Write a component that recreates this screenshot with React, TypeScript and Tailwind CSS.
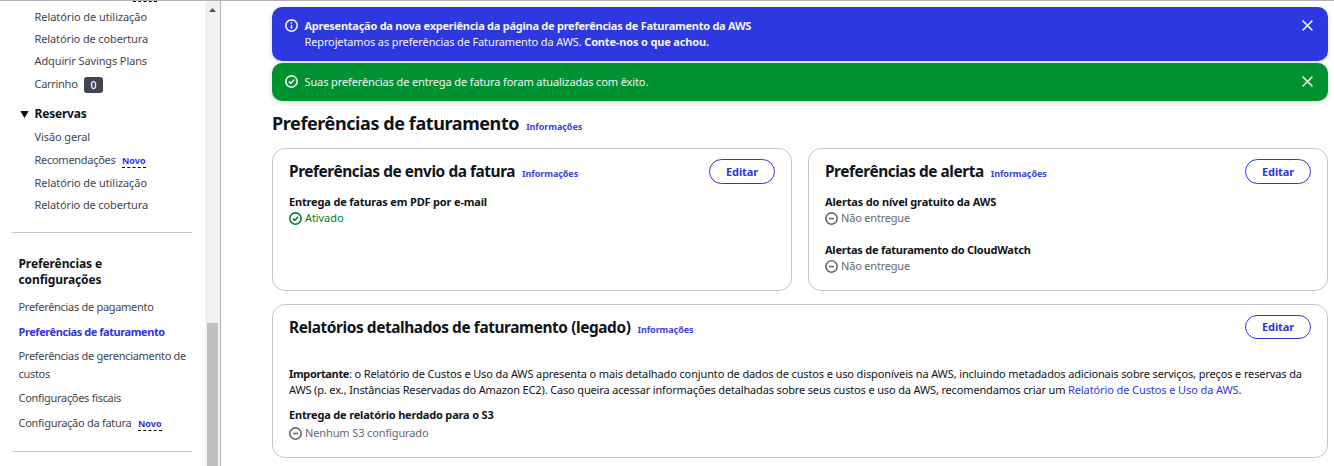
import type { ReactNode } from "react";

const stroke = { fill: "none", stroke: "currentColor", strokeWidth: 2 } as const;

function CheckIcon({ className = "" }: { className?: string }) {
  return (
    <svg viewBox="0 0 16 16" className={`size-[13px] shrink-0 ${className}`} {...stroke}>
      <circle cx="8" cy="8" r="7" />
      <path d="M4.8 8.2 7.1 10.4 11.2 5.8" />
    </svg>
  );
}

function InfoIcon({ className = "" }: { className?: string }) {
  return (
    <svg viewBox="0 0 16 16" className={`size-[13px] shrink-0 ${className}`} {...stroke}>
      <circle cx="8" cy="8" r="7" />
      <path d="M8 12V7M8 5.7V3.9" strokeWidth="1.9" />
    </svg>
  );
}

function StoppedIcon({ className = "" }: { className?: string }) {
  return (
    <svg viewBox="0 0 16 16" className={`size-[13px] shrink-0 ${className}`} {...stroke}>
      <circle cx="8" cy="8" r="7" />
      <path d="M5 8h6" />
    </svg>
  );
}

function CloseIcon() {
  return (
    <svg viewBox="0 0 11 11" className="size-[11px] shrink-0 text-[#ebebf0]" {...stroke} strokeWidth={1.5}>
      <path d="M.6.6l9.8 9.8M10.4.6.6 10.4" />
    </svg>
  );
}

function Novo() {
  return (
    <span className="ml-[6.5px] h-4 border-b border-dashed border-black text-[9px] leading-[17px] font-bold text-[#2f36e0]">
      Novo
    </span>
  );
}

function Info() {
  return <a className="ml-[7px] text-[9px] font-bold tracking-[-0.075px] text-[#3b3fe2]">Informações</a>;
}

function Edit({ className = "h-[25px]" }: { className?: string }) {
  return (
    <button
      className={`flex w-[66px] items-center justify-center rounded-full border border-[#2f36e0] text-[11px] leading-4 font-bold tracking-[-0.11px] text-[#2f36e0] ${className}`}
    >
      Editar
    </button>
  );
}

function Card({ title, edit, className, children }: { title: ReactNode; edit?: string; className: string; children: ReactNode }) {
  return (
    <section className={`rounded-[13px] border border-[#c4c4cc] px-4 pt-[10px] ${className}`}>
      <div className="flex h-[25px] items-start justify-between">
        <div className="flex items-baseline leading-[26px]">{title}</div>
        <Edit className={edit} />
      </div>
      {children}
    </section>
  );
}

const h2 = "text-[15.4px] font-bold text-[#0f141a]";
const label = "text-[11px] leading-4 font-bold text-[#0f141a]";
const status = "flex items-center gap-[3px] leading-4 text-[#656871]";

function Sidebar() {
  return (
    <nav className="flex w-[205px] flex-col overflow-hidden text-[#424650]">
      <div className="ml-[133px] h-px w-6 shrink-0 border-t border-dashed border-black" />
      <div className="flex flex-col pl-[34.5px]">
        <a className="mt-[7px] tracking-[-0.072px]">Relatório de utilização</a>
        <a className="mt-[6px] tracking-[-0.12px]">Relatório de cobertura</a>
        <a className="mt-[6px] tracking-[-0.114px]">Adquirir Savings Plans</a>
        <div className="mt-[7px] flex h-[17px]">
          <a className="tracking-[-0.288px]">Carrinho</a>
          <span className="mt-px ml-[6.5px] flex h-4 w-[19px] items-center justify-center rounded-[3px] bg-[#424650] text-[10.5px] font-medium text-white">
            0
          </span>
        </div>
      </div>
      <div className="mt-[13px] flex items-center pl-[20px]">
        <svg viewBox="0 0 9 7" className="mr-[5.5px] h-[7px] w-[9px] fill-[#0f141a]">
          <path d="M.3 0h8.4L4.5 7Z" />
        </svg>
        <h3 className="text-[12px] leading-4 font-bold tracking-[-0.2px] text-[#0f141a]">Reservas</h3>
      </div>
      <div className="flex flex-col pl-[34.5px]">
        <a className="mt-[7px] tracking-[-0.108px]">Visão geral</a>
        <div className="mt-[7px] flex h-4">
          <a className="tracking-[-0.278px]">Recomendações</a>
          <Novo />
        </div>
        <a className="mt-[7px] tracking-[-0.072px]">Relatório de utilização</a>
        <a className="mt-[6px] tracking-[-0.12px]">Relatório de cobertura</a>
      </div>
      <hr className="mt-[19px] ml-3 w-[180px] border-[#c6c6cd]" />
      <div className="flex flex-col pl-[18.5px]">
        <h3 className="mt-[23px] text-[12px] leading-4 font-bold tracking-[-0.1px] text-[#0f141a]">
          Preferências e<br />
          configurações
        </h3>
        <a className="mt-[11px] tracking-[-0.3px]">Preferências de pagamento</a>
        <a className="mt-[9px] font-bold tracking-[-0.43px] text-[#2f36e0]">Preferências de faturamento</a>
        <a className="mt-[7px] leading-[18px] tracking-[-0.3px]">
          Preferências de gerenciamento de
          <br />
          custos
        </a>
        <a className="mt-[7px] tracking-[-0.3px]">Configurações fiscais</a>
        <div className="mt-[9px] flex h-4">
          <a className="tracking-[-0.275px]">Configuração da fatura</a>
          <Novo />
        </div>
      </div>
      <hr className="mt-[20px] ml-3 w-[180px] border-[#c6c6cd]" />
    </nav>
  );
}

export default function App() {
  return (
    <div className="flex h-[466px] w-[1334px] overflow-hidden border-t border-[#b4b1bd] bg-white font-['Noto_Sans',sans-serif] text-[11px] leading-4 whitespace-nowrap text-[#0f141a]">
      <Sidebar />
      <div className="flex w-4 flex-col border-r border-[#b1b1ba] bg-[#f1f1f1]">
        <svg viewBox="0 0 7 4" className="mt-[7px] ml-1 h-1 w-[7px] fill-[#505050]">
          <path d="M3.5 0 7 4H0Z" />
        </svg>
        <div className="mt-[311px] ml-[2px] w-[11px] grow bg-[#c1c1c1]" />
      </div>
      <main className="flex w-[1107px] flex-col pt-[6px] pl-[51px]">
        <div className="flex h-[54px] shrink-0 rounded-[10px] bg-[#2d38e0] pt-[11px] pr-[15px] pl-[13px] text-[#f3f3f7] shadow-[0_2px_5px_rgba(0,7,22,0.14)]">
          <InfoIcon className="mt-px" />
          <div className="ml-[6.5px] grow">
            <p className="font-bold tracking-[-0.253px]">
              Apresentação da nova experiência da página de preferências de Faturamento da AWS
            </p>
            <p className="tracking-[-0.131px]">
              Reprojetamos as preferências de Faturamento da AWS.{" "}
              <b className="tracking-[-0.164px]">Conte-nos o que achou.</b>
            </p>
          </div>
          <div className="mt-[2px]">
            <CloseIcon />
          </div>
        </div>
        <div className="mt-[2px] flex h-[38px] shrink-0 rounded-[10px] bg-[#009231] pt-[11px] pr-[15px] pl-[13px] text-[#f3f3f7] shadow-[0_2px_5px_rgba(0,7,22,0.14)]">
          <CheckIcon className="mt-px" />
          <p className="ml-[6.5px] grow tracking-[-0.12px]">
            Suas preferências de entrega de fatura foram atualizadas com êxito.
          </p>
          <div className="mt-[2px]">
            <CloseIcon />
          </div>
        </div>
        <div className="mt-[10px] flex h-[28px] items-baseline leading-6">
          <h1 className="text-[18px] font-bold tracking-[-0.41px]">Preferências de faturamento</h1>
          <Info />
        </div>
        <div className="mt-[9px] flex gap-4">
          <Card
            className="h-[143px] w-[520px]"
            title={
              <>
                <h2 className={`${h2} tracking-[-0.43px]`}>Preferências de envio da fatura</h2>
                <Info />
              </>
            }
          >
            <p className={`mt-[10px] tracking-[-0.17px] ${label}`}>Entrega de faturas em PDF por e-mail</p>
            <p className="flex items-center gap-[3px] tracking-[-0.076px] text-[#00802f]">
              <CheckIcon />
              Ativado
            </p>
          </Card>
          <Card
            className="h-[143px] w-[520px]"
            title={
              <>
                <h2 className={`${h2} tracking-[-0.44px]`}>Preferências de alerta</h2>
                <Info />
              </>
            }
          >
            <p className={`mt-[10px] tracking-[-0.17px] ${label}`}>Alertas do nível gratuito da AWS</p>
            <p className={`${status} tracking-[-0.195px]`}>
              <StoppedIcon />
              Não entregue
            </p>
            <p className={`mt-4 tracking-[-0.238px] ${label}`}>Alertas de faturamento do CloudWatch</p>
            <p className={`${status} tracking-[-0.195px]`}>
              <StoppedIcon />
              Não entregue
            </p>
          </Card>
        </div>
        <Card
          className="mt-[13px] h-[154px] w-[1056px]"
          edit="h-[24px]"
          title={
            <>
              <h2 className={`${h2} tracking-[-0.4px]`}>Relatórios detalhados de faturamento (legado)</h2>
              <Info />
            </>
          }
        >
          <p className="mt-[26px] tracking-[-0.13px]">
            <b className="tracking-[-0.36px]">Importante</b>: o Relatório de Custos e Uso da AWS apresenta o mais
            detalhado conjunto de dados de custos e uso disponíveis na AWS, incluindo metadados adicionais sobre
            serviços, preços e reservas da
          </p>
          <p className="tracking-[-0.152px]">
            AWS (p. ex., Instâncias Reservadas do Amazon EC2). Caso queira acessar informações detalhadas sobre seus
            custos e uso da AWS, recomendamos criar um{" "}
            <a className="tracking-[-0.1px] text-[#3338e0]">Relatório de Custos e Uso da AWS</a>.
          </p>
          <p className={`mt-[9px] tracking-[-0.177px] ${label}`}>Entrega de relatório herdado para o S3</p>
          <p className={`mt-[2px] ${status} tracking-[-0.126px]`}>
            <StoppedIcon />
            Nenhum S3 configurado
          </p>
        </Card>
      </main>
    </div>
  );
}
